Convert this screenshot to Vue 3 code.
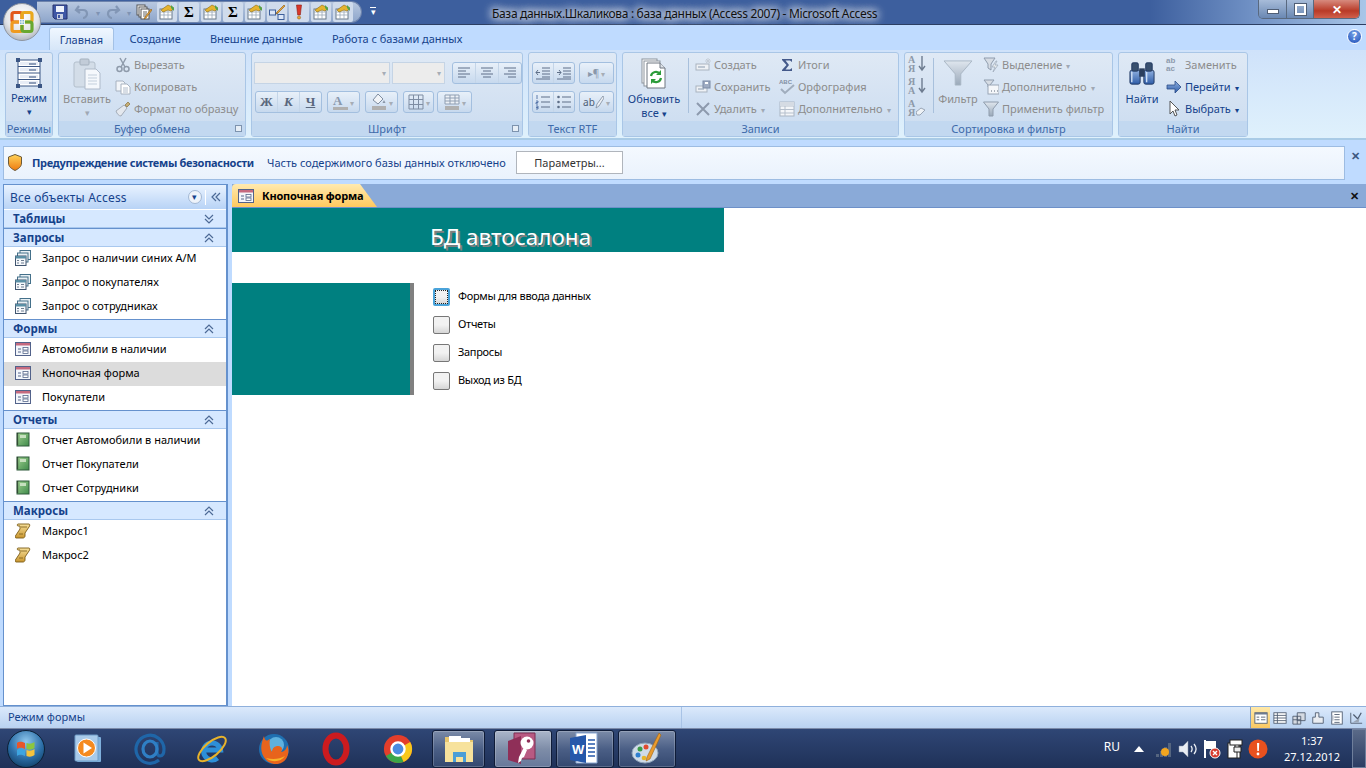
<template>
  <div class="app">
    <svg class="sprite" width="0" height="0">
      <defs>
        <linearGradient id="g-blue" x1="0" y1="0" x2="0" y2="1"><stop offset="0" stop-color="#8fb0e0"/><stop offset="1" stop-color="#2f5da8"/></linearGradient>
        <linearGradient id="g-gray" x1="0" y1="0" x2="0" y2="1"><stop offset="0" stop-color="#dfe6ee"/><stop offset="1" stop-color="#9aa9ba"/></linearGradient>
        <linearGradient id="g-green" x1="0" y1="0" x2="1" y2="1"><stop offset="0" stop-color="#9fd08f"/><stop offset="1" stop-color="#3f8a4a"/></linearGradient>
        <linearGradient id="g-gold" x1="0" y1="0" x2="0" y2="1"><stop offset="0" stop-color="#f7e09a"/><stop offset="1" stop-color="#c9962f"/></linearGradient>
        <linearGradient id="g-shield" x1="0" y1="0" x2="0" y2="1"><stop offset="0" stop-color="#ffd45a"/><stop offset="1" stop-color="#ee7a10"/></linearGradient>
        <radialGradient id="g-orb" cx="0.5" cy="0.35" r="0.7"><stop offset="0" stop-color="#ffffff"/><stop offset="0.6" stop-color="#e4e6ea"/><stop offset="1" stop-color="#a7acb5"/></radialGradient>
        <radialGradient id="g-start" cx="0.5" cy="0.3" r="0.8"><stop offset="0" stop-color="#8fc8ee"/><stop offset="0.55" stop-color="#2c6fa8"/><stop offset="1" stop-color="#0d3558"/></radialGradient>
      </defs>
      <symbol id="i-save" viewBox="0 0 16 16"><path d="M1 1h14v14H3l-2-2z" fill="#3f57a5" stroke="#26336f"/><rect x="4" y="2" width="8" height="6" fill="#eef2fb"/><rect x="5" y="10" width="6" height="5" fill="#c8cfe0"/><rect x="6" y="11" width="2" height="3" fill="#3f57a5"/></symbol>
      <symbol id="i-undo" viewBox="0 0 16 16"><path d="M5 2 2 6l4 3M3 6h6c3 0 4 2 4 4s-2 4-4 4" fill="none" stroke="#8296b5" stroke-width="2.2"/></symbol>
      <symbol id="i-redo" viewBox="0 0 16 16"><path d="M11 2l3 4-4 3M13 6H7C4 6 3 8 3 10s2 4 4 4" fill="none" stroke="#8296b5" stroke-width="2.2"/></symbol>
      <symbol id="i-formedit" viewBox="0 0 16 16"><rect x="1" y="1" width="8" height="10" fill="#fff" stroke="#555"/><rect x="3" y="3" width="8" height="10" fill="#fff" stroke="#555"/><rect x="5" y="5" width="8" height="10" fill="#fff" stroke="#555"/><path d="M7 8h4M7 10h4M7 12h3" stroke="#666"/><path d="M15 5 9 13l-1 2 2-1 6-8z" fill="#e8a33a" stroke="#8a5a10" stroke-width=".6"/></symbol>
      <symbol id="i-qat" viewBox="0 0 16 16"><rect x="1" y="5" width="12" height="10" fill="#fff" stroke="#6a7a8a"/><path d="M1 8h12M1 11h12M5 5v10M9 5v10" stroke="#9aa8b8" stroke-width=".8"/><path d="M2 6 9 1l6 3-3 3-3-1-5 2z" fill="#e5b32e" stroke="#8c6a12" stroke-width=".6"/><path d="M12 1l3 3v3l-3-3z" fill="#52a34a"/></symbol>
      <symbol id="i-rel" viewBox="0 0 16 16"><rect x="0.5" y="6" width="6" height="5" fill="#dbe6f7" stroke="#3d5f9a"/><rect x="9" y="10.500" width="6" height="5" fill="#dbe6f7" stroke="#3d5f9a"/><path d="M6 8l4 3" stroke="#3d5f9a"/><path d="M15 1 8 8l-1 2 2-1 7-7z" fill="#e8a33a" stroke="#8a5a10" stroke-width=".6"/></symbol>
      <symbol id="i-bang" viewBox="0 0 16 16"><path d="M5.500 1h5L9.300 11H6.700z" fill="#d9372a" stroke="#8d1c13" stroke-width=".6"/><circle cx="8" cy="13.500" r="1.600" fill="#e8a33a" stroke="#8d5c13" stroke-width=".5"/></symbol>
      <symbol id="i-mode" viewBox="0 0 26 30"><rect x="2" y="2" width="22" height="26" fill="#fff" stroke="#3b5684"/><path d="M2 8.500h22M2 15h22M2 21.500h22" stroke="#3b5684"/><path d="M4 4h18v3H4zM4 10h18v3H4zM4 17h18v3H4zM4 23h18v3H4z" fill="#e7ecf5"/><path d="M13 5h7v2h-7zM13 11h7v2h-7zM13 18h7v2h-7zM13 24h7v2h-7z" fill="#8d9db8"/><path d="M0 0h4v4H0zM22 0h4v4h-4zM0 26h4v4H0zM22 26h4v4h-4z" fill="#3b5684"/></symbol>
      <symbol id="i-paste" viewBox="0 0 28 32"><rect x="1" y="4" width="21" height="25" rx="2" fill="#d3dde8" stroke="#b3bfcc"/><rect x="7" y="1" width="9" height="6" rx="1" fill="#c2ccd8" stroke="#a5b1be"/><path d="M12 11h11l4 4v16H12z" fill="#f5f8fc" stroke="#aebaca"/><path d="M15 17h9M15 20h9M15 23h9M15 26h9" stroke="#c3cfdc"/></symbol>
      <symbol id="i-cut" viewBox="0 0 16 16"><path d="M5 1l5 9M11 1 6 10" stroke="#8f9bab" stroke-width="1.500"/><circle cx="4.500" cy="12" r="2.500" fill="none" stroke="#8f9bab" stroke-width="1.500"/><circle cx="11.500" cy="12" r="2.500" fill="none" stroke="#8f9bab" stroke-width="1.500"/></symbol>
      <symbol id="i-copy" viewBox="0 0 16 16"><path d="M1 2h7l2 2v8H1z" fill="#f2f5f9" stroke="#a7b2c0"/><path d="M6 5h6l3 3v7H6z" fill="#fff" stroke="#a7b2c0"/><path d="M8 9h5M8 11h5M8 13h5" stroke="#b0bccb"/></symbol>
      <symbol id="i-brush" viewBox="0 0 16 16"><path d="M1 10 9 4l3 3-6 8c-2 0-4-2-5-5z" fill="#e4e8ee" stroke="#a4adb9"/><path d="M10 4l3-3 2 2-3 3z" fill="#c5ad76" stroke="#9c8a5f"/></symbol>
      <symbol id="i-sum-s" viewBox="0 0 16 16"><path d="M3 2h10v3l-2-1.500H6.500L10 8l-3.500 4.500H11L13 11v3H3v-1l4.500-5L3 3z" fill="#44598a"/></symbol>
      <symbol id="i-refresh" viewBox="0 0 26 32"><rect x="1" y="1" width="15" height="24" fill="#fff" stroke="#8c939c"/><rect x="3" y="3" width="16" height="25" fill="#fff" stroke="#8c939c"/><path d="M6 5h13l5 5v20H6z" fill="#fff" stroke="#6f7780"/><path d="M19 5v5h5" fill="#dfe4ea" stroke="#6f7780"/><path d="M10 18a5 5 0 0 1 9-2M20 20a5 5 0 0 1-9 2" fill="none" stroke="#2c9c3a" stroke-width="2.200"/><path d="M20 12v5h-5zM10 26v-5h5z" fill="#2c9c3a"/></symbol>
      <symbol id="i-new" viewBox="0 0 16 16"><rect x="1" y="7" width="13" height="6" fill="#eef1f5" stroke="#a9b3bf"/><rect x="3" y="9" width="7" height="2" fill="#bcc6d2"/><path d="M13 1v6M10 4h6M11 2l4 4M15 2l-4 4" stroke="#c4ccd6"/></symbol>
      <symbol id="i-saverec" viewBox="0 0 16 16"><rect x="1" y="7" width="11" height="6" fill="#eef1f5" stroke="#a9b3bf"/><rect x="3" y="9" width="6" height="2" fill="#bcc6d2"/><rect x="8" y="2" width="7" height="7" fill="#9eabc2" stroke="#7b8aa5"/><rect x="10" y="3" width="3" height="2" fill="#fff"/></symbol>
      <symbol id="i-del" viewBox="0 0 16 16"><path d="M2 2l12 12M14 2 2 14" stroke="#8d9aad" stroke-width="2"/></symbol>
      <symbol id="i-more" viewBox="0 0 16 16"><rect x="1" y="1" width="14" height="14" fill="#f4f6f9" stroke="#aab5c3"/><path d="M1 5h14M1 8.500h14M1 12h14M6 5v10" stroke="#b5bfcc"/><rect x="1" y="1" width="14" height="4" fill="#d5dbe3"/></symbol>
      <symbol id="i-funnel" viewBox="0 0 32 28"><path d="M1 1h30L19 15v12h-6V15z" fill="url(#g-gray)" stroke="#a8b4c2"/></symbol>
      <symbol id="i-sel" viewBox="0 0 16 16"><path d="M1 1h11L8 7v6L5 11V7z" fill="#d6dce4" stroke="#8f9cad"/><path d="M13 4 9 10h3l-2 5 5-7h-3l2-4z" fill="#e8ecef" stroke="#9aa6b6" stroke-width=".7"/></symbol>
      <symbol id="i-adv" viewBox="0 0 16 16"><path d="M1 1h10L7 6v3L5 8V6z" fill="#d6dce4" stroke="#8f9cad"/><rect x="5" y="6" width="11" height="9" fill="#f5f7fa" stroke="#9aa6b6"/><path d="M8 12h1M11 12h1M14 12h1" stroke="#5e6b7d"/></symbol>
      <symbol id="i-apply" viewBox="0 0 16 16"><path d="M0.500 1h15L10 8v7H6V8z" fill="url(#g-gray)" stroke="#8f9cad"/></symbol>
      <symbol id="i-binoc" viewBox="0 0 28 28"><rect x="1" y="11" width="11" height="15" rx="2" fill="url(#g-blue)" stroke="#1f3760"/><rect x="16" y="11" width="11" height="15" rx="2" fill="url(#g-blue)" stroke="#1f3760"/><rect x="3" y="3" width="7" height="9" rx="1.500" fill="#38506f" stroke="#1f3760"/><rect x="18" y="3" width="7" height="9" rx="1.500" fill="#38506f" stroke="#1f3760"/><rect x="11" y="9" width="6" height="9" fill="#2b3f5e"/><path d="M3 13v11M19 13v11" stroke="#cfe0f5" stroke-width="1.500"/></symbol>
      <symbol id="i-goto" viewBox="0 0 16 16"><path d="M1 6h8V2l6 6-6 6v-4H1z" fill="url(#g-blue)" stroke="#2b4c88" stroke-width=".8"/></symbol>
      <symbol id="i-cursor" viewBox="0 0 16 16"><path d="M4 0v13l3-3 2 5 2-1-2-5h4z" fill="#fff" stroke="#444" stroke-width=".9"/></symbol>
      <symbol id="i-qry" viewBox="0 0 16 16"><rect x="5" y="0.500" width="10.500" height="9" fill="#e8f0f4" stroke="#44708a"/><rect x="2.500" y="3" width="10.500" height="9" fill="#e8f0f4" stroke="#44708a"/><rect x="0.500" y="6" width="10.500" height="9.500" fill="#f6f8fb" stroke="#40556f"/><rect x="0.500" y="6" width="10.500" height="2.500" fill="#5a8fa5"/><path d="M2 10.500h2M6 10.500h3M2 13h2M6 13h3" stroke="#6d7d90"/></symbol>
      <symbol id="i-frm" viewBox="0 0 16 16"><rect x="0.500" y="1.500" width="15" height="13" fill="#f3f6fb" stroke="#52628a"/><rect x="1" y="2" width="14" height="2.500" fill="#c66a7f"/><path d="M3 8h3M3 11h3" stroke="#56678a"/><rect x="8" y="6.500" width="5" height="2.500" fill="#fff" stroke="#56678a" stroke-width=".8"/><rect x="8" y="10" width="5" height="2.500" fill="#fff" stroke="#56678a" stroke-width=".8"/></symbol>
      <symbol id="i-rpt" viewBox="0 0 16 16"><rect x="2" y="1" width="12" height="13" fill="url(#g-green)" stroke="#2e5a3a"/><rect x="5" y="3" width="6" height="3" fill="#c7e0bf"/><path d="M2.500 1.500v12" stroke="#111" stroke-dasharray="1 1" stroke-width="1.400"/></symbol>
      <symbol id="i-mac" viewBox="0 0 16 16"><path d="M3 1h11c1 0 1 2 0 3l-4 6v3c0 1-1 2-2 2H1c-1 0-1-2 0-3l4-6V3H3c-1 0-1-2 0-2z" fill="url(#g-gold)" stroke="#7a5b17" stroke-width=".9"/><path d="M6 4h6M4 11h4" stroke="#7a5b17" stroke-width=".8"/></symbol>
      <symbol id="i-view1" viewBox="0 0 16 16"><rect x="1" y="2" width="14" height="12" fill="#fff" stroke="#4f5c70"/><rect x="1" y="2" width="14" height="2" fill="#6d7a8e"/><path d="M3 7h3M3 10h3M8 7h5M8 10h5" stroke="#4f5c70"/></symbol>
      <symbol id="i-view2" viewBox="0 0 16 16"><rect x="1" y="2" width="14" height="12" fill="#fff" stroke="#4f5c70"/><path d="M1 5h14M1 8h14M1 11h14M5 2v12" stroke="#4f5c70"/></symbol>
      <symbol id="i-view3" viewBox="0 0 16 16"><path d="M6 2h9v9H6zM1 6h9v9H1z" fill="#d5dae2" stroke="#4f5c70"/><path d="M6 6v9M1 10h9" stroke="#4f5c70"/></symbol>
      <symbol id="i-view4" viewBox="0 0 16 16"><path d="M2 14V7h3V2h4v5h5v7z" fill="#e9ecf1" stroke="#4f5c70"/></symbol>
      <symbol id="i-view5" viewBox="0 0 16 16"><rect x="2" y="1" width="12" height="14" fill="#fff" stroke="#4f5c70"/><path d="M5 4h6M5 7h6M5 10h6M5 13h6" stroke="#4f5c70"/><path d="M2 5h2v6H2z" fill="#b1b8c4"/></symbol>
      <symbol id="i-view6" viewBox="0 0 16 16"><path d="M2 14h13M2 14V2" stroke="#4f5c70" fill="none"/><path d="M5 4l5 5 4-7" stroke="#4f5c70" fill="none" stroke-width="1.400"/><path d="M4 13l8-5-1 5z" fill="#9aa6b6"/></symbol>
    </svg>

    <header class="titlebar">
      <svg class="orb" viewBox="0 0 38 38" width="38" height="38">
        <circle cx="19" cy="19" r="18.500" fill="url(#g-orb)" stroke="#8d94a0"/>
        <rect x="9" y="9.500" width="10" height="9.500" rx="2" fill="none" stroke="#e2581a" stroke-width="3.200"/>
        <rect x="19" y="9.500" width="10" height="9.500" rx="2" fill="none" stroke="#e9a81d" stroke-width="3.200"/>
        <rect x="9" y="19" width="10" height="9.500" rx="2" fill="none" stroke="#ef9a1f" stroke-width="3.200"/>
        <rect x="19" y="19" width="10" height="9.500" rx="2" fill="none" stroke="#69a82f" stroke-width="3.200"/>
        <rect x="16" y="16" width="6" height="6" fill="#fff" opacity=".9"/>
        <path d="M17 17h1.500v1.500H17zM19.500 17H21v1.500h-1.500zM17 19.500h1.500V21H17zM19.500 19.500H21V21h-1.500z" fill="#7fb2dc"/>
      </svg>
      <div class="qat">
        <template v-for="(q, i) in qat" :key="i">
          <span v-if="q.kind === 'arrow'" class="qat-arrow">▾</span>
          <span v-else class="qat-btn" :class="{ boxed: q.boxed, last: q.icon === 'formedit' }">
            <b v-if="q.kind === 'sum'" class="sigma">Σ</b>
            <svg v-else width="16" height="16"><use :href="'#i-' + q.icon" /></svg>
          </span>
        </template>
      </div>
      <span class="qat-custom"><i></i>▾</span>
      <div class="title"><span>База данных.Шкаликова : база данных (Access 2007)  -  Microsoft Access</span></div>
      <div class="winbtns">
        <span class="wb wb1"><i class="wb-min"></i></span>
        <span class="wb wb2"><i class="wb-max"></i></span>
        <span class="wb wb-close">✕</span>
      </div>
    </header>

    <nav class="tabs">
      <span class="tab active">Главная</span>
      <span class="tab">Создание</span>
      <span class="tab">Внешние данные</span>
      <span class="tab">Работа с базами данных</span>
      <span class="help">?</span>
    </nav>

    <section class="ribbon">
      <div class="grp" style="width: 48px">
        <div class="grp-body">
          <div class="big w48">
            <svg width="26" height="30"><use href="#i-mode" /></svg>
            <span class="lbl on">Режим</span>
            <span class="arr on">▾</span>
          </div>
        </div>
        <div class="grp-label">Режимы</div>
      </div>

      <div class="grp" style="width: 188px">
        <div class="grp-body">
          <div class="big w56">
            <svg width="28" height="32"><use href="#i-paste" /></svg>
            <span class="lbl">Вставить</span>
            <span class="arr">▾</span>
          </div>
          <div class="col">
            <div v-for="r in clip" :key="r.t" class="row"><svg width="16" height="16"><use :href="'#i-' + r.i" /></svg><span>{{ r.t }}</span></div>
          </div>
        </div>
        <div class="grp-label">Буфер обмена<i class="launch"></i></div>
      </div>

      <div class="grp" style="width: 272px">
        <div class="grp-body font-body">
          <div class="font-row">
            <span class="combo c1"><em>▾</em></span>
            <span class="combo c2"><em>▾</em></span>
            <span class="bgroup ml3">
              <span v-for="n in alignments" :key="n" class="fb"><svg width="16" height="16"><path :d="n" stroke="#5e6f88" fill="none" /></svg></span>
            </span>
          </div>
          <div class="font-row gap5">
            <span class="bgroup b67">
              <span class="fb serif">Ж</span>
              <span class="fb serif it">К</span>
              <span class="fb serif ul">Ч</span>
            </span>
            <span class="bgroup"><span class="fb w32"><span class="fa">А<u></u></span><em>▾</em></span></span>
            <span class="bgroup"><span class="fb w32"><svg width="16" height="18" viewBox="0 0 16 18"><path d="M7 1 2 7l5 4 5-5z" fill="#f1f4f8" stroke="#7f8da0"/><path d="M13 7l1.500 3-3 0z" fill="#8a97a8"/><rect x="1" y="13" width="14" height="4" fill="#b0b0b0"/></svg><em>▾</em></span></span>
            <span class="bgroup"><span class="fb w31"><svg width="16" height="16"><path d="M1 1h14v14H1zM1 5.500h14M1 10.500h14M5.500 1v14M10.500 1v14" stroke="#7e8da3" fill="none" /></svg><em>▾</em></span></span>
            <span class="bgroup tuck"><span class="fb w35"><svg width="16" height="17" viewBox="0 0 16 17"><path d="M1 1h14v9H1zM1 4h14M1 7h14M6 1v9M11 1v9" stroke="#8f9eb2" fill="#eef2f7"/><rect x="1" y="12" width="14" height="4" fill="#b0b0b0"/></svg><em>▾</em></span></span>
          </div>
        </div>
        <div class="grp-label">Шрифт<i class="launch"></i></div>
      </div>

      <div class="grp" style="width: 89px">
        <div class="grp-body font-body">
          <div class="font-row">
            <span class="bgroup b43">
              <span class="fb"><svg width="16" height="16"><path d="M7 3h8M7 6h8M7 9h8M7 12h8M1 7.500h4M3 5 1 7.500 3 10M1 14h14" stroke="#5e6f88" fill="none"/></svg></span>
              <span class="fb"><svg width="16" height="16"><path d="M7 3h8M7 6h8M7 9h8M7 12h8M1 7.500h4M3 5l2 2.500L3 10M1 14h14" stroke="#5e6f88" fill="none"/></svg></span>
            </span>
            <span class="bgroup"><span class="fb w35"><span class="pil">▸¶</span><em>▾</em></span></span>
          </div>
          <div class="font-row">
            <span class="bgroup b43">
              <span class="fb"><svg width="16" height="16"><path d="M6 3h9M6 8h9M6 13h9" stroke="#5e6f88"/><path d="M2 1v4M1 7h2v1.500H1V10h2M1 12h2v3H1M1 13.500h2" stroke="#3d5f9a" fill="none" stroke-width=".8"/></svg></span>
              <span class="fb"><svg width="16" height="16"><path d="M6 3h9M6 8h9M6 13h9" stroke="#5e6f88"/><circle cx="2.500" cy="3" r="1.300" fill="#5e6f88"/><circle cx="2.500" cy="8" r="1.300" fill="#5e6f88"/><circle cx="2.500" cy="13" r="1.300" fill="#5e6f88"/></svg></span>
            </span>
            <span class="bgroup"><span class="fb w35"><span class="abp">ab</span><svg width="9" height="14"><path d="M8 1 2 9l-1 4 3-2 5-8z" fill="#eef1f5" stroke="#7f8da0" stroke-width=".8"/></svg><em>▾</em></span></span>
          </div>
        </div>
        <div class="grp-label">Текст RTF</div>
      </div>

      <div class="grp" style="width: 277px">
        <div class="grp-body">
          <div class="big w62 ml3">
            <svg width="26" height="32"><use href="#i-refresh" /></svg>
            <span class="lbl on">Обновить</span>
            <span class="lbl on tight">все <i class="mini">▾</i></span>
          </div>
          <i class="sep sep-rec"></i>
          <div class="col w84">
            <div v-for="r in recA" :key="r.t" class="row"><svg width="16" height="16"><use :href="'#i-' + r.i" /></svg><span>{{ r.t }}<em v-if="r.d" class="dd">▾</em></span></div>
          </div>
          <div class="col">
            <div class="row">
              <svg width="16" height="16"><use href="#i-sum-s" /></svg><span>Итоги</span>
            </div>
            <div class="row">
              <span class="ic-spell"><i>ABC</i><svg width="16" height="11" viewBox="0 0 16 11"><path d="M2 5 6 9 15 1" fill="none" stroke="#a0adbd" stroke-width="2"/></svg></span><span>Орфография</span>
            </div>
            <div class="row">
              <svg width="16" height="16"><use href="#i-more" /></svg><span>Дополнительно<em class="dd">▾</em></span>
            </div>
          </div>
        </div>
        <div class="grp-label">Записи</div>
      </div>

      <div class="grp" style="width: 209px">
        <div class="grp-body">
          <div class="sorts">
            <span class="ic-sort"><span>А<br>Я</span><svg width="8" height="16"><path d="M4 0v14M1 10l3 4 3-4" fill="none" stroke="#6e7c90" stroke-width="1.400"/></svg></span>
            <span class="ic-sort"><span>Я<br>А</span><svg width="8" height="16"><path d="M4 0v14M1 10l3 4 3-4" fill="none" stroke="#6e7c90" stroke-width="1.400"/></svg></span>
            <span class="ic-sort"><span>А<br>Я</span><svg width="10" height="16"><path d="M0 12l5-4 4 2-5 5H1z" fill="#eef2f6" stroke="#9aa6b6"/></svg></span>
          </div>
          <i class="sep sep-sort"></i>
          <div class="big w42">
            <svg width="30" height="26" viewBox="0 0 32 28" class="funnel"><use href="#i-funnel" /></svg>
            <span class="lbl lbl-f">Фильтр</span>
          </div>
          <div class="col ml4">
            <div v-for="r in filt" :key="r.t" class="row"><svg width="16" height="16"><use :href="'#i-' + r.i" /></svg><span>{{ r.t }}<em v-if="r.d" class="dd">▾</em></span></div>
          </div>
        </div>
        <div class="grp-label">Сортировка и фильтр</div>
      </div>

      <div class="grp" style="width: 130px">
        <div class="grp-body">
          <div class="big w46">
            <svg width="28" height="26" viewBox="0 0 28 28" class="funnel"><use href="#i-binoc" /></svg>
            <span class="lbl on lbl-f">Найти</span>
          </div>
          <div class="col ml1">
            <div class="row"><span class="ic-rep">ab<br>ac</span><span>Заменить</span></div>
            <div v-for="r in find" :key="r.t" class="row on"><svg width="16" height="16"><use :href="'#i-' + r.i" /></svg><span>{{ r.t }}<em class="dd">▾</em></span></div>
          </div>
        </div>
        <div class="grp-label">Найти</div>
      </div>
    </section>

    <div class="security">
      <div class="sec-bar">
        <svg width="14" height="17" viewBox="0 0 14 17"><path d="M7 .5 13.500 3v6c0 4-3.500 6-6.500 7.500C4 15 .5 13 .5 9V3z" fill="url(#g-shield)" stroke="#6b5a3a"/></svg>
        <b>Предупреждение системы безопасности</b>
        <span class="sec-msg">Часть содержимого базы данных отключено</span>
        <button class="sec-btn">Параметры...</button>
      </div>
      <span class="sec-x">✕</span>
    </div>

    <main class="main">
      <aside class="navp">
        <div class="nav-head">
          <span>Все объекты Access</span>
          <i class="nav-drop">▾</i>
          <i class="nav-sep"></i>
          <svg width="10" height="10" class="nav-coll"><path d="M5 1 1 5l4 4M9 1 5 5l4 4" fill="none" stroke="#4d6a96" stroke-width="1.200"/></svg>
        </div>
        <div v-for="s in sections" :key="s.name" class="nav-sec">
          <div class="sec-head">
            <span>{{ s.name }}</span>
            <svg width="10" height="10"><path :d="s.items.length ? 'M1 5l4-4 4 4M1 9l4-4 4 4' : 'M1 1l4 4 4-4M1 5l4 4 4-4'" fill="none" stroke="#4d6a96" stroke-width="1.200"/></svg>
          </div>
          <div v-for="it in s.items" :key="it" class="nav-item" :class="{ cur: it === 'Кнопочная форма' }">
            <svg width="16" height="16"><use :href="'#i-' + s.icon" /></svg>
            <span>{{ it }}</span>
          </div>
        </div>
      </aside>
      <div class="doc">
        <div class="doc-tabs">
          <div class="doc-tab">
            <svg width="16" height="16"><use href="#i-frm" /></svg>
            <b>Кнопочная форма</b>
          </div>
          <span class="doc-x">✕</span>
        </div>
        <div class="form-head"><h1>БД автосалона</h1></div>
        <div class="form-body">
          <div class="form-side"></div>
          <div class="form-menu">
            <div v-for="(m, i) in menu" :key="m" class="menu-row">
              <span class="menu-btn" :class="{ focus: i === 0 }"></span>
              <span class="menu-text">{{ m }}</span>
            </div>
          </div>
        </div>
      </div>
    </main>

    <footer class="status">
      <span class="st-text"><span>Режим формы</span></span>
      <div class="st-views">
        <span v-for="(v, i) in 6" :key="v" class="st-v" :class="{ on: i === 0 }"><svg width="14" height="14"><use :href="'#i-view' + v" /></svg></span>
      </div>
    </footer>

    <footer class="taskbar">
      <svg class="start" width="38" height="38" viewBox="0 0 38 38">
        <circle cx="19" cy="19" r="18.500" fill="url(#g-start)" stroke="#0c2036"/>
        <path d="M10 13c3-2 5-1 8 0v6c-3-1-5-2-8 0z" fill="#e8562a"/>
        <path d="M19.500 13c3 1 5 1 8-1v6c-3 2-5 2-8 1z" fill="#8cc63f"/>
        <path d="M10 20c3-2 5-1 8 0v6c-3-1-5-2-8 0z" fill="#3da5e0"/>
        <path d="M19.500 20c3 1 5 1 8-1v6c-3 2-5 2-8 1z" fill="#f5c33b"/>
      </svg>

      <span class="tb-pin ml13">
        <svg width="28" height="30" viewBox="0 0 28 30"><rect x="3" y="3" width="24" height="25" rx="1" fill="#7fb0dc"/><rect x="1" y="1" width="23" height="26" rx="1" fill="#a9cbea" stroke="#6f9dc8"/><circle cx="12.500" cy="14" r="9" fill="#f58a1f" stroke="#fff"/><path d="M9.500 8.500v11l8.500-5.500z" fill="#fff"/></svg>
      </span>
      <span class="tb-pin">
        <svg width="32" height="34" viewBox="0 0 32 34"><path d="M25 28a14 14 0 1 1 5-11c0 5-2 7-4 7s-3-2-3-4V10" fill="none" stroke="#1f66a8" stroke-width="3.200"/><ellipse cx="16" cy="17" rx="7" ry="8" fill="none" stroke="#2f7fc4" stroke-width="3.200"/></svg>
      </span>
      <span class="tb-pin">
        <svg width="34" height="34" viewBox="0 0 34 34"><path d="M8.500 18h17a8.500 8.500 0 1 0-3 8" fill="none" stroke="#2d8fd8" stroke-width="5"/><ellipse cx="17" cy="17" rx="17" ry="7" transform="rotate(-40 17 17)" fill="none" stroke="#e8b32b" stroke-width="2"/></svg>
      </span>
      <span class="tb-pin">
        <svg width="32" height="34" viewBox="0 0 32 34"><circle cx="16" cy="17" r="15" fill="#1f6fb0"/><circle cx="18" cy="13" r="8" fill="#5eb1de"/><path d="M6 4c-3 8-5 16 2 24 6 6 16 5 20-1 3-5 3-10 1-14 0 4-3 7-6 7 2-3 1-6-3-6-3 0-6 2-6 6-2-3-3-8-2-13-3 2-5 3-6-3z" fill="#e8641c"/><path d="M8 26c6 5 15 4 19-2-5 3-12 4-19 2z" fill="#f6b32a"/></svg>
      </span>
      <span class="tb-pin"><svg width="28" height="34" viewBox="0 0 28 34"><ellipse cx="14" cy="17" rx="10.500" ry="13.500" fill="none" stroke="#cc1b1f" stroke-width="6"/></svg></span>
      <span class="tb-pin">
        <svg width="30" height="30" viewBox="0 0 32 32"><circle cx="16" cy="16" r="15" fill="#e33e2b"/><path d="M16 16 3.100 23.500A15 15 0 0 0 22 29.800z" fill="#3aa648"/><path d="M16 16 29 8.500A15 15 0 0 1 22 29.800z" fill="#f8c81c"/><circle cx="16" cy="16" r="7" fill="#4a8be0" stroke="#fff" stroke-width="2.500"/></svg>
      </span>

      <span class="tb-app ml33 w53">
        <svg width="34" height="34" viewBox="0 0 34 34"><path d="M3 5h11l2 3h15v22H3z" fill="#e7c66e"/><rect x="7" y="4" width="12" height="8" fill="#fff"/><rect x="16" y="6" width="12" height="8" fill="#fff"/><path d="M3 10h28v20H3z" fill="#f7e29c"/><path d="M11 20h13v10h-3v-5h-7v5h-3z" fill="#4b9ed6"/></svg>
      </span>
      <i class="tb-gap"></i>
      <span class="tb-app w58 cur">
        <svg width="32" height="34" viewBox="0 0 32 34"><path d="M7 1h21v26H7z" fill="#b85a82" stroke="#7c2f52"/><path d="M1 9 14 4v28L1 28z" fill="#8f2f58"/><circle cx="20" cy="11" r="6.500" fill="#fff"/><circle cx="21.500" cy="9" r="1.800" fill="#8f2f58"/><path d="M17 15l-5 10-1 6 3-2 1-3 2-1 3-7z" fill="#fff"/></svg>
      </span>
      <span class="tb-app w58">
        <svg width="32" height="34" viewBox="0 0 32 34"><path d="M7 1h21v30H7z" fill="#fff" stroke="#87a5d2"/><path d="M1 6 17 3v28L1 28z" fill="#2658aa"/><text x="3" y="22" font-size="13" font-weight="bold" font-family="Liberation Sans" fill="#fff">W</text><path d="M19 8h7M19 12h7M19 16h7M19 20h7M19 24h7" stroke="#2658aa" stroke-width="1.500"/></svg>
      </span>
      <span class="tb-app w58">
        <svg width="34" height="34" viewBox="0 0 34 34"><ellipse cx="15" cy="21" rx="13" ry="10" fill="#cfdbe8" stroke="#8ea2b8"/><circle cx="10" cy="17" r="2.500" fill="#3c9c47"/><circle cx="16" cy="15" r="2.500" fill="#e0492f"/><circle cx="8" cy="23" r="2.500" fill="#2f7fd0"/><circle cx="14" cy="26" r="2.300" fill="#e6b52a"/><path d="M29 1l2 2-11 24-4 2 1-4z" fill="#e99b2f" stroke="#9c6315" stroke-width=".6"/></svg>
      </span>

      <div class="tray">
        <span class="lang">RU</span>
        <svg class="tr-up" width="12" height="8"><path d="M6 1 1 7h10z" fill="#fff"/></svg>
        <svg width="20" height="18" viewBox="0 0 20 18"><path d="M2 14h3v3H2zM6 11h3v6H6zM10 7h3v10h-3zM14 3h3v14h-3z" fill="#55657f"/><circle cx="11" cy="12" r="4" fill="#f2a51f"/></svg>
        <svg width="20" height="18" viewBox="0 0 20 18"><path d="M1 6h4l5-5v16l-5-5H1z" fill="#e9edf3" stroke="#8a96a8" stroke-width=".5"/><path d="M13 6c1.500 2 1.500 4 0 6M16 4c2.500 3 2.500 7 0 10" fill="none" stroke="#e9edf3" stroke-width="1.300"/></svg>
        <svg width="20" height="20" viewBox="0 0 20 20"><path d="M3 1v18" stroke="#fff" stroke-width="2"/><path d="M4 2h10v8H4z" fill="#fff"/><circle cx="13" cy="14" r="5" fill="#d83b2e" stroke="#fff"/><path d="M11 12l4 4M15 12l-4 4" stroke="#fff" stroke-width="1.400"/></svg>
        <svg width="20" height="20" viewBox="0 0 20 20"><rect x="2" y="4" width="12" height="15" fill="#fff" stroke="#222"/><rect x="4" y="1" width="12" height="5" fill="#fff" stroke="#222"/><path d="M9 6v2M13 6v2M8 8h7v5h-7zM11 13v6" stroke="#222" fill="#eee"/></svg>
        <svg class="tr-alert" width="20" height="20" viewBox="0 0 20 20"><circle cx="10" cy="10" r="9.500" fill="#e8511f"/><path d="M9 4h2.200l-.3 8H9.300z" fill="#fff"/><circle cx="10" cy="15" r="1.400" fill="#fff"/></svg>
        <div class="clock"><span>1:37</span><span>27.12.2012</span></div>
        <span class="show-desk"></span>
      </div>
    </footer>
  </div>
</template>

<script setup>
const qat = [
  { icon: 'save' },
  { icon: 'undo' }, { kind: 'arrow' },
  { icon: 'redo' }, { kind: 'arrow' },
  { icon: 'formedit' },
  { icon: 'qat', boxed: true },
  { kind: 'sum', boxed: true },
  { icon: 'qat', boxed: true },
  { kind: 'sum', boxed: true },
  { icon: 'qat', boxed: true },
  { icon: 'rel', boxed: true },
  { icon: 'bang', boxed: true },
  { icon: 'qat', boxed: true },
  { icon: 'qat', boxed: true }
]

const clip = [
  { t: 'Вырезать', i: 'cut' },
  { t: 'Копировать', i: 'copy' },
  { t: 'Формат по образцу', i: 'brush' }
]

// paths for the three alignment buttons
const alignments = [
  'M2 3h12M2 6h8M2 9h12M2 12h8',
  'M2 3h12M4 6h8M2 9h12M4 12h8',
  'M2 3h12M6 6h8M2 9h12M6 12h8'
]

const recA = [
  { t: 'Создать', i: 'new' },
  { t: 'Сохранить', i: 'saverec' },
  { t: 'Удалить', i: 'del', d: true }
]
const filt = [
  { t: 'Выделение', i: 'sel', d: true },
  { t: 'Дополнительно', i: 'adv', d: true },
  { t: 'Применить фильтр', i: 'apply' }
]
const find = [
  { t: 'Перейти', i: 'goto' },
  { t: 'Выбрать', i: 'cursor' }
]

const sections = [
  { name: 'Таблицы', icon: 'qry', items: [] },
  { name: 'Запросы', icon: 'qry', items: ['Запрос о наличии синих А/М', 'Запрос о покупателях', 'Запрос о сотрудниках'] },
  { name: 'Формы', icon: 'frm', items: ['Автомобили в наличии', 'Кнопочная форма', 'Покупатели'] },
  { name: 'Отчеты', icon: 'rpt', items: ['Отчет Автомобили в наличии', 'Отчет Покупатели', 'Отчет Сотрудники'] },
  { name: 'Макросы', icon: 'mac', items: ['Макрос1', 'Макрос2'] }
]

const menu = ['Формы для ввода данных', 'Отчеты', 'Запросы', 'Выход из БД']
</script>

<style>
html, body {
  margin: 0;
  background: #fff;
}
</style>

<style scoped>
.app {
  width: 1366px;
  height: 768px;
  overflow: hidden;
  display: flex;
  flex-direction: column;
  position: relative;
  font-family: "Noto Sans", "Open Sans", sans-serif;
  font-size: 11px;
  color: #15428b;
  background: #bfdbff;
}

.sprite {
  position: absolute;
}

/* title bar */
.titlebar {
  height: 25px;
  display: flex;
  align-items: flex-start;
  flex: none;
  background: linear-gradient(90deg, #3d5f9e 0, #3d5f9e 1150px, #6f90c4 1250px, #a9c6e8 1366px);
  border-bottom: 1px solid #2c3f63;
  box-sizing: border-box;
}

.orb {
  position: absolute;
  left: 3px;
  top: 3px;
  z-index: 3;
}

.qat {
  margin: 1px 0 0 37px;
  width: 325px;
  height: 22px;
  padding-left: 12px;
  box-sizing: border-box;
  display: flex;
  align-items: center;
  border: 1px solid #6d83ac;
  border-left: 0;
  border-radius: 0 12px 12px 0;
  background: linear-gradient(#b8c8e0, #8ea6cb);
}

.qat-btn {
  width: 22px;
  height: 20px;
  display: flex;
  align-items: center;
  justify-content: center;
}

.qat-btn.last {
  margin-right: 2px;
}

.qat-btn.boxed {
  background: #cfdbec;
  border-radius: 2px;
  width: 20px;
  margin-right: 2px;
}

.qat-arrow {
  width: 9px;
  font-size: 8px;
  color: #7f93b3;
  text-align: center;
}

.sigma {
  font-family: "Liberation Serif", serif;
  font-size: 15px;
  color: #000;
}

.qat-custom {
  margin: 4px 0 0 6px;
  width: 10px;
  color: #fff;
  font-size: 9px;
  line-height: 8px;
  text-align: center;
}

.qat-custom i {
  display: block;
  width: 6px;
  height: 1px;
  margin: 3px auto 0;
  background: #fff;
}

.title {
  position: absolute;
  left: 492px;
  top: 6px;
  font-size: 12px;
  line-height: 16px;
  letter-spacing: -0.34px;
  color: #111;
  white-space: pre;
  text-shadow: 0 0 8px #fff, 0 0 8px #fff, 0 0 12px #fff;
}

.winbtns {
  margin-left: auto;
  margin-right: 6px;
  height: 18px;
  display: flex;
  border: 1px solid #59697f;
  border-top: 0;
  border-radius: 0 0 5px 5px;
  overflow: hidden;
}

.wb {
  display: flex;
  align-items: center;
  justify-content: center;
  background: linear-gradient(#a7bcd9, #6a88b3);
  border-right: 1px solid #59697f;
  box-sizing: border-box;
}

.wb1 { width: 28px; }
.wb2 { width: 27px; }

.wb-close {
  width: 45px;
  border: 0;
  color: #fff;
  font-size: 12px;
  font-weight: bold;
  background: linear-gradient(#d78a7e, #b93a27 60%, #d0604c);
}

.wb-min {
  width: 10px;
  height: 3px;
  margin-top: 4px;
  background: #fff;
  border: 1px solid #4f5e75;
}

.wb-max {
  width: 7px;
  height: 7px;
  border: 2px solid #fff;
  outline: 1px solid #4f5e75;
}

/* ribbon tabs */
.tabs {
  height: 25px;
  flex: none;
  display: flex;
  align-items: flex-end;
  padding-left: 49px;
  background: #bfdbff;
  position: relative;
}

.tab {
  height: 23px;
  line-height: 23px;
  padding: 0 14.500px;
}

.tab.active {
  width: 65px;
  padding: 0;
  margin-right: 1px;
  text-align: center;
  background: linear-gradient(#f0f7ff, #d6e6f8);
  border: 1px solid #a3c1e6;
  border-bottom: 0;
  border-radius: 3px 3px 0 0;
  box-sizing: border-box;
}

.help {
  position: absolute;
  right: 4px;
  top: 4px;
  width: 13px;
  height: 13px;
  border-radius: 50%;
  border: 1px solid #fff;
  background: radial-gradient(circle at 50% 30%, #7aa5e8, #1c4db8);
  color: #fff;
  font-size: 10px;
  font-weight: bold;
  line-height: 13px;
  text-align: center;
}

.ribbon {
  height: 90px;
  flex: none;
  box-sizing: border-box;
  padding: 2px 5px 0;
  display: flex;
  gap: 5px;
  background: linear-gradient(#cfe2fa, #dff1fc);
  border-bottom: 2px solid #a9cbe6;
}

.grp {
  height: 85px;
  box-sizing: border-box;
  display: flex;
  flex-direction: column;
  flex: none;
  border: 1px solid #a9c6e6;
  border-radius: 3px;
  background: linear-gradient(#dfe9f5, #cbdcf0);
}

.grp-body {
  height: 68px;
  box-sizing: border-box;
  display: flex;
  flex: none;
}

.grp-label {
  flex: 1;
  text-align: center;
  line-height: 15px;
  background: #c2d8f0;
  color: #3e6aaa;
  position: relative;
}

.launch {
  position: absolute;
  right: 3px;
  top: 4px;
  width: 5px;
  height: 5px;
  border: 1px solid #7d93ae;
  background: #e6eef6;
}

.big {
  display: flex;
  flex-direction: column;
  align-items: center;
  padding-top: 5px;
  flex: none;
  color: #8c8c8c;
}

.big .funnel {
  margin-top: 2px;
}

.w48 { width: 46px; }
.w56 { width: 56px; }
.w62 { width: 56px; }
.w42 { width: 42px; }
.w46 { width: 46px; }
.ml1 { margin-left: 1px; }
.ml3 { margin-left: 3px; }
.ml4 { margin-left: 4px; }

.lbl {
  margin-top: 2px;
  line-height: 14px;
}

.lbl.tight {
  margin-top: 0;
}

.lbl-f {
  margin-top: 6px;
}

.w48 .lbl {
  margin-top: 3px;
}

.lbl.on {
  color: #15428b;
}

.arr {
  font-size: 9px;
  line-height: 11px;
  margin-top: 1px;
  color: #a0a8b4;
}

.arr.on,
.mini {
  color: #15428b;
}

.mini {
  font-size: 9px;
  font-style: normal;
}

.col {
  padding-top: 1px;
  display: flex;
  flex-direction: column;
}

.col.w84 {
  width: 84px;
}

.row {
  height: 22px;
  display: flex;
  align-items: center;
  gap: 3px;
  color: #8c8c8c;
  white-space: nowrap;
}

.row > span:last-child {
  margin-top: -2px;
}

.row.on {
  color: #15428b;
}

.dd {
  margin-left: 4px;
  font-size: 8px;
  font-style: normal;
  color: #a0a8b4;
}

.row.on .dd {
  color: #15428b;
}

.ic-spell {
  width: 16px;
  height: 16px;
  display: block;
  position: relative;
  flex: none;
}

.ic-spell i {
  position: absolute;
  left: 0;
  top: 0;
  font: bold 6px/7px "Liberation Sans", sans-serif;
  color: #7f8ea3;
}

.ic-spell svg {
  position: absolute;
  left: 0;
  top: 5px;
}

.ic-rep {
  width: 16px;
  flex: none;
  font: bold 8px/8px "Liberation Sans", sans-serif;
  color: #8e9bad;
}

.sep {
  width: 1px;
  height: 55px;
  margin-top: 5px;
  background: #a8c0dc;
  flex: none;
}

.sep-rec {
  margin-left: 6px;
  margin-right: 6px;
}

.sep-sort {
  margin-left: 5px;
  margin-right: 3px;
}

.sorts {
  width: 23px;
  padding: 3px 0 0 3px;
  display: flex;
  flex-direction: column;
  gap: 5px;
  flex: none;
  box-sizing: border-box;
}

.ic-sort {
  height: 17px;
  width: 18px;
  display: flex;
  justify-content: space-between;
  font: bold 10px/8.500px "Liberation Serif", serif;
  color: #8d99a9;
}

.font-body {
  flex-direction: column;
  padding: 9px 0 0 2px;
  gap: 7px;
}

.font-row {
  display: flex;
  height: 22px;
  gap: 4px;
}

.font-row.gap5 {
  gap: 5px;
  padding-left: 1px;
}

.combo {
  height: 22px;
  box-sizing: border-box;
  background: #ececec;
  border: 1px solid #c5d4e5;
  position: relative;
}

.combo em {
  position: absolute;
  right: 3px;
  top: 4px;
  font-size: 8px;
  font-style: normal;
  color: #a6adb6;
}

.c1 { width: 137px; margin-right: -2px; }
.c2 { width: 54px; }

.bgroup {
  display: flex;
  height: 22px;
  box-sizing: border-box;
  border: 1px solid #a3bfdf;
  border-radius: 3px;
  background: linear-gradient(#e8f0f9, #c7d9ee);
}

.bgroup.b67 { width: 67px; }
.bgroup.b43 { width: 43px; margin-left: 1px; }
.bgroup.tuck { margin-left: -2px; }

.fb {
  flex: 1;
  min-width: 20px;
  width: 22px;
  display: flex;
  align-items: center;
  justify-content: center;
  color: #5e6f88;
  position: relative;
}

.fb + .fb {
  border-left: 1px solid #c4d5e8;
}

.fb em {
  font-size: 8px;
  font-style: normal;
  color: #a6adb6;
  margin-left: 2px;
}

.w31 { width: 29px; }
.w32 { width: 31px; }
.w35 { width: 33px; }

.serif {
  font-family: "Liberation Serif", serif;
  font-weight: bold;
  font-size: 13px;
  color: #59677d;
}

.it { font-style: italic; }
.ul { text-decoration: underline; }

.fa {
  font-family: "Liberation Serif", serif;
  font-weight: bold;
  font-size: 13px;
  line-height: 13px;
  color: #8898ad;
}

.fa u {
  display: block;
  width: 15px;
  height: 3px;
  background: #b0b0b0;
}

.pil {
  font-size: 10px;
  color: #8a98ab;
}

.abp {
  font-size: 10px;
  color: #4d5d75;
}

/* security bar */
.security {
  height: 44px;
  flex: none;
  box-sizing: border-box;
  padding: 6px 0 4px 3px;
  display: flex;
  background: #bfdbff;
}

.sec-bar {
  width: 1342px;
  box-sizing: border-box;
  padding: 0 0 2px 4px;
  display: flex;
  align-items: center;
  background: linear-gradient(#f4f9ff, #eaf2fc);
  border: 1px solid #9dbce2;
  color: #15428b;
}

.sec-bar b {
  margin-left: 10px;
  letter-spacing: -0.3px;
}

.sec-msg {
  position: absolute;
  left: 267px;
}

.sec-btn {
  position: absolute;
  left: 516px;
  width: 107px;
  height: 23px;
  padding: 0;
  border: 1px solid #b0b5bc;
  background: #fff;
  font: inherit;
  color: #333;
}

.sec-x {
  margin: 2px 0 0 6px;
  color: #3c5880;
  font-size: 11px;
  font-weight: bold;
}

/* main area */
.main {
  flex: 1;
  min-height: 0;
  display: flex;
  padding-left: 3px;
  background: #bfdbff;
}

.navp {
  width: 225px;
  flex: none;
  box-sizing: border-box;
  background: #fff;
  border: 1px solid #6591cd;
  border-width: 1px 2px 1px 1px;
  margin-right: 4px;
  color: #000;
}

.nav-head {
  height: 24px;
  display: flex;
  align-items: center;
  padding: 0 5px 0 6px;
  background: linear-gradient(#e8f2ff, #b8d3f6);
  border-bottom: 1px solid #fff;
  font-size: 12px;
  letter-spacing: 0.2px;
  color: #15428b;
}

.nav-drop {
  margin-left: auto;
  width: 12px;
  height: 12px;
  border: 1px solid #a3b8d4;
  border-radius: 50%;
  background: #eef3fa;
  font-size: 9px;
  line-height: 11px;
  text-align: center;
  font-style: normal;
}

.nav-sep {
  width: 1px;
  height: 15px;
  margin: 0 5px 0 3px;
  background: #fff;
}

.sec-head {
  height: 18px;
  box-sizing: border-box;
  padding: 0 12px 0 9px;
  display: flex;
  align-items: center;
  justify-content: space-between;
  background: #d6e8ff;
  border-bottom: 1px solid #a9c8ee;
  font-weight: bold;
  font-size: 11.500px;
  color: #15428b;
}

.nav-sec {
  border-bottom: 1px solid #6591cd;
}

.nav-sec:last-child {
  border-bottom: 0;
}

.nav-item {
  height: 24px;
  display: flex;
  align-items: center;
  padding-left: 11px;
  gap: 11px;
  white-space: nowrap;
}

.nav-item span {
  margin-top: -4px;
}

.nav-item svg {
  margin-top: -2px;
}

.nav-item.cur {
  background: #dcdcdc;
}

.doc {
  flex: 1;
  min-width: 0;
  background: #fff;
}

.doc-tabs {
  height: 24px;
  box-sizing: border-box;
  display: flex;
  align-items: flex-end;
  justify-content: space-between;
  padding-right: 7px;
  background: #8aaad8;
  border-bottom: 1px solid #6d90c8;
}

.doc-tab {
  width: 145px;
  height: 23px;
  box-sizing: border-box;
  display: flex;
  align-items: center;
  gap: 8px;
  padding-left: 6px;
  color: #000;
  letter-spacing: -0.2px;
  background: linear-gradient(#ffeab0, #ffc95e);
  clip-path: polygon(0 0, 128px 0, 100% 100%, 0 100%);
  border-radius: 4px 0 0 0;
}

.doc-x {
  align-self: center;
  font-weight: bold;
  font-size: 11px;
  color: #111;
}

.form-head {
  width: 492px;
  height: 44px;
  background: #008080;
  position: relative;
}

.form-head h1 {
  margin: 0;
  padding: 15px 0 0 198px;
  font-weight: 400;
  font-size: 22.500px;
  line-height: 28px;
  color: #fff;
  white-space: nowrap;
  text-shadow: 2px 2px 0 #808080;
}

.form-body {
  display: flex;
  margin-top: 31px;
}

.form-side {
  width: 178px;
  height: 112px;
  background: #008080;
  border-right: 4px solid #808080;
}

.form-menu {
  margin-left: 19px;
}

.menu-row {
  height: 28px;
  display: flex;
  align-items: center;
  color: #000;
  gap: 8px;
}

.menu-text {
  margin-top: -4px;
  letter-spacing: -0.3px;
}

.menu-btn {
  width: 17px;
  height: 18px;
  box-sizing: border-box;
  border: 1px solid #777;
  border-radius: 2px;
  background: linear-gradient(#f2f2f2 50%, #d6d6d6);
}

.menu-btn.focus {
  border: 2px solid #4aa3da;
  outline: 1px dotted #222;
  outline-offset: -3px;
}

/* status bar */
.status {
  height: 22px;
  flex: none;
  box-sizing: border-box;
  display: flex;
  align-items: stretch;
  justify-content: space-between;
  background: linear-gradient(#dbe9fb, #b9d2f1);
  border-top: 1px solid #8fb0dc;
}

.st-text {
  width: 682px;
  box-sizing: border-box;
  padding: 0 0 2px 8px;
  display: flex;
  align-items: center;
  border-right: 1px solid #a8c3e6;
}

.st-views {
  width: 116px;
  display: flex;
  border-left: 1px solid #7e9ec9;
  box-sizing: border-box;
}

.st-v {
  width: 19px;
  display: flex;
  align-items: center;
  justify-content: center;
}

.st-v.on {
  background: linear-gradient(#ffe9a8, #fbc862);
}

/* windows taskbar */
.taskbar {
  height: 40px;
  flex: none;
  display: flex;
  align-items: center;
  box-sizing: border-box;
  padding-left: 7px;
  background: linear-gradient(#2f4675, #1f3158);
  border-top: 1px solid #7b8aa8;
}

.tb-pin {
  width: 62px;
  display: flex;
  justify-content: center;
  flex: none;
}

.ml13 { margin-left: 12px; }
.ml33 { margin-left: 3px; }

.tb-app {
  height: 38px;
  margin-right: 4px;
  box-sizing: border-box;
  display: flex;
  align-items: center;
  justify-content: center;
  flex: none;
  border: 1px solid #0f1c38;
  border-radius: 3px;
  background: linear-gradient(#7b8ba8, #4b5f86 50%, #34486f);
  box-shadow: inset 0 0 0 1px rgba(255, 255, 255, .2);
}

.tb-app.cur {
  background: linear-gradient(#aab6ca, #7e8da8 50%, #67789a);
}

.w53 { width: 53px; }
.w58 { width: 58px; }

.tb-gap {
  width: 5px;
  flex: none;
}

.tray {
  margin-left: auto;
  height: 100%;
  display: flex;
  align-items: center;
  gap: 4px;
  color: #fff;
}

.lang {
  margin-right: 9px;
  font-size: 12px;
  margin-top: -4px;
}

.tr-up {
  margin-right: 5px;
}

.tr-alert {
  margin-left: -2px;
}

.clock {
  width: 80px;
  margin-right: -4px;
  display: flex;
  flex-direction: column;
  align-items: center;
  font-size: 11px;
  line-height: 16px;
}

.show-desk {
  width: 14px;
  height: 100%;
  box-sizing: border-box;
  border: 1px solid #6f7f9c;
  background: linear-gradient(#5a6a88, #2c3d63);
}
</style>
